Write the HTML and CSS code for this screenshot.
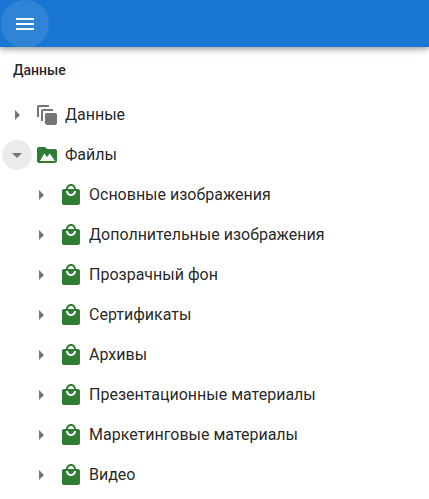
FILE: index.html
```html
<!DOCTYPE html>
<html lang="ru">
<head>
<meta charset="utf-8">
<title>Данные</title>
<link rel="stylesheet" href="styles.css">
</head>
<body>
<svg class="defs" width="0" height="0" aria-hidden="true">
  <symbol id="right" viewBox="0 0 24 24"><path d="M10 17l5-5-5-5v10z"/></symbol>
  <symbol id="down" viewBox="0 0 24 24"><path d="M7 10l5 5 5-5z"/></symbol>
  <symbol id="bag" viewBox="0 0 24 24"><path d="M19 6h-2c0-2.76-2.24-5-5-5S7 3.24 7 6H5c-1.1 0-1.99.9-1.99 2L3 20c0 1.1.9 2 2 2h14c1.1 0 2-.9 2-2V8c0-1.1-.9-2-2-2zm-7-3c1.66 0 3 1.34 3 3H9c0-1.66 1.34-3 3-3zm0 10c-2.76 0-5-2.24-5-5h2c0 1.66 1.34 3 3 3s3-1.34 3-3h2c0 2.76-2.24 5-5 5z"/></symbol>
</svg>
<header class="appbar">
  <button class="menu" aria-label="Меню">
    <svg class="menu-icon" viewBox="0 0 24 24"><path d="M3 18h18v-2H3v2zm0-5h18v-2H3v2zm0-7v2h18V6H3z"/></svg>
  </button>
</header>
<main class="content">
  <h1 class="title">Данные</h1>
  <div class="tree">
    <div class="row">
      <span class="toggle"><svg class="arrow"><use href="#right"/></svg></span>
      <svg class="icon grey" viewBox="0 0 24 24"><path d="M14 2H4c-1.11 0-2 .9-2 2v10h2V4h10V2zm4 4H8c-1.11 0-2 .9-2 2v10h2V8h10V6zm2 4h-8c-1.11 0-2 .9-2 2v8c0 1.1.89 2 2 2h8c1.1 0 2-.9 2-2v-8c0-1.1-.9-2-2-2z"/></svg>
      <span class="label">Данные</span>
    </div>
    <div class="row">
      <span class="toggle open"><svg class="arrow"><use href="#down"/></svg></span>
      <svg class="icon green" viewBox="0 0 24 24"><path fill-rule="evenodd" d="M10 4H4c-1.1 0-2 .9-2 2v12c0 1.1.9 2 2 2h16c1.1 0 2-.9 2-2V8c0-1.1-.9-2-2-2h-8l-2-2zM5 18l4.2-7.5 2.8 3.6 2.8-3.6L20 18H5z"/></svg>
      <span class="label">Файлы</span>
    </div>
    <div class="children">
      <div class="row"><span class="toggle"><svg class="arrow"><use href="#right"/></svg></span><svg class="icon green"><use href="#bag"/></svg><span class="label">Основные изображения</span></div>
      <div class="row"><span class="toggle"><svg class="arrow"><use href="#right"/></svg></span><svg class="icon green"><use href="#bag"/></svg><span class="label">Дополнительные изображения</span></div>
      <div class="row"><span class="toggle"><svg class="arrow"><use href="#right"/></svg></span><svg class="icon green"><use href="#bag"/></svg><span class="label">Прозрачный фон</span></div>
      <div class="row"><span class="toggle"><svg class="arrow"><use href="#right"/></svg></span><svg class="icon green"><use href="#bag"/></svg><span class="label">Сертификаты</span></div>
      <div class="row"><span class="toggle"><svg class="arrow"><use href="#right"/></svg></span><svg class="icon green"><use href="#bag"/></svg><span class="label">Архивы</span></div>
      <div class="row"><span class="toggle"><svg class="arrow"><use href="#right"/></svg></span><svg class="icon green"><use href="#bag"/></svg><span class="label">Презентационные материалы</span></div>
      <div class="row"><span class="toggle"><svg class="arrow"><use href="#right"/></svg></span><svg class="icon green"><use href="#bag"/></svg><span class="label">Маркетинговые материалы</span></div>
      <div class="row"><span class="toggle"><svg class="arrow"><use href="#right"/></svg></span><svg class="icon green"><use href="#bag"/></svg><span class="label">Видео</span></div>
    </div>
  </div>
</main>
</body>
</html>
```
FILE: styles.css
```css
html, body {
  margin: 0;
  height: 100%;
  overflow: hidden;
  background: #fff;
  font-family: Roboto, "Liberation Sans", sans-serif;
  color: rgba(0, 0, 0, 0.87);
}
.defs { position: absolute; }
.appbar {
  height: 47px;
  background: #1976d2;
  box-shadow: 0 2px 4px -1px rgba(0,0,0,.2), 0 4px 5px 0 rgba(0,0,0,.14), 0 1px 10px 0 rgba(0,0,0,.12);
  display: flex;
  align-items: center;
  padding-left: 1px;
}
.menu {
  width: 48px;
  height: 48px;
  padding: 12px;
  border: 0;
  border-radius: 50%;
  background: rgba(255, 255, 255, 0.1);
  display: block;
}
.menu-icon { display: block; width: 24px; height: 24px; fill: #fff; }
.content { padding-top: 15px; }
.title {
  margin: 0;
  padding-left: 13px;
  font-size: 14px;
  line-height: 16px;
  font-weight: 500;
}
.tree { padding-top: 17px; }
.row {
  height: 40px;
  display: flex;
  align-items: center;
  padding-left: 2px;
}
.children { padding-left: 24px; }
.toggle {
  width: 30px;
  height: 30px;
  border-radius: 50%;
  display: flex;
  align-items: center;
  justify-content: center;
  flex: none;
}
.toggle.open { background: rgba(0, 0, 0, 0.08); }
.arrow { width: 24px; height: 24px; fill: #757575; display: block; }
.icon { width: 24px; height: 24px; flex: none; margin-left: 3px; }
.grey { fill: #757575; }
.green { fill: #2e7d32; }
.label {
  margin-left: 6px;
  font-size: 16px;
  line-height: 24px;
  white-space: nowrap;
}
```
